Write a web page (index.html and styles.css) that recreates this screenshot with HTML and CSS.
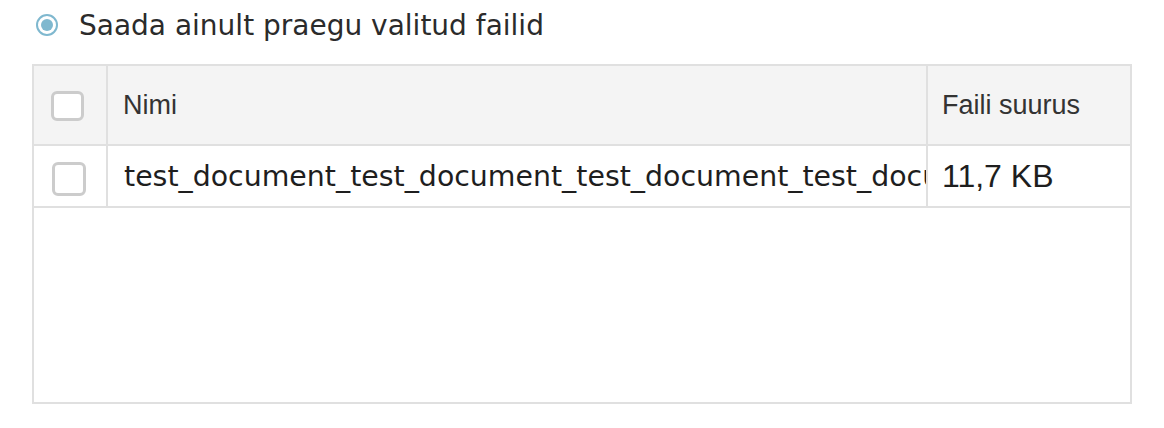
FILE: index.html
```html
<!DOCTYPE html>
<html lang="et">
<head>
<meta charset="utf-8">
<title>Failid</title>
<link rel="stylesheet" href="styles.css">
</head>
<body>
<div class="page">
  <label class="radio-row">
    <span class="radio"><span class="radio-dot"></span></span>
    <span class="radio-label">Saada ainult praegu valitud failid</span>
  </label>
  <div class="panel">
    <div class="grid">
      <div class="cell head check-cell"><span class="checkbox head-box"></span></div>
      <div class="cell head name-cell">Nimi</div>
      <div class="cell head size-cell last">Faili suurus</div>
      <div class="cell body check-cell"><span class="checkbox body-box"></span></div>
      <div class="cell body name-cell file-name"><span class="file-text">test_document_test_document_test_document_test_document.pdf</span></div>
      <div class="cell body size-cell last">11,7 KB</div>
    </div>
  </div>
</div>
</body>
</html>
```
FILE: styles.css
```css
html, body {
  margin: 0;
  padding: 0;
  background: #ffffff;
}
.page {
  width: 1164px;
  height: 428px;
  padding: 0 0 0 32px;
  box-sizing: border-box;
  font-family: "Liberation Sans", Arial, sans-serif;
  color: #333333;
}
.radio-row {
  display: flex;
  align-items: center;
  height: 50px;
  padding-left: 4px;
  gap: 21px;
}
.radio {
  width: 22px;
  height: 22px;
  box-sizing: border-box;
  border: 2px solid #7fb8cf;
  border-radius: 50%;
  display: flex;
  align-items: center;
  justify-content: center;
  flex: none;
}
.radio-dot {
  width: 12px;
  height: 12px;
  border-radius: 50%;
  background: #7fb8cf;
}
.radio-label {
  font-family: "DejaVu Sans", Verdana, sans-serif;
  font-size: 28px;
  color: #2b2b2b;
}
.panel {
  margin-top: 14px;
  width: 1100px;
  height: 340px;
  border: 2px solid #e0e0e0;
  box-sizing: border-box;
}
.grid {
  display: grid;
  grid-template-columns: 74px 820px 1fr;
  grid-template-rows: 80px 62px;
}
.cell {
  display: flex;
  align-items: center;
  border-right: 2px solid #e0e0e0;
  border-bottom: 2px solid #e0e0e0;
  box-sizing: border-box;
  min-width: 0;
}
.cell.last {
  border-right: none;
}
.head {
  background: #f4f4f4;
  font-size: 27px;
  color: #333333;
}
.body {
  font-size: 32px;
  color: #1e1e1e;
}
.check-cell {
  padding-left: 17px;
}
.name-cell {
  padding-left: 15px;
}
.file-name {
  font-family: "DejaVu Sans", Verdana, sans-serif;
  font-size: 28.4px;
  padding-left: 16px;
  overflow: hidden;
}
.file-text {
  display: block;
  width: 100%;
  white-space: nowrap;
  overflow: hidden;
  text-overflow: clip;
}
.size-cell {
  padding-left: 14px;
}
.checkbox {
  display: block;
  width: 34px;
  height: 34px;
  box-sizing: border-box;
  border: 3px solid #cccccc;
  border-radius: 6px;
  background: #ffffff;
}
.head-box {
  width: 33px;
  height: 30px;
  margin-top: 2px;
}
.body-box {
  margin-left: 1px;
  margin-top: 6px;
}
```
